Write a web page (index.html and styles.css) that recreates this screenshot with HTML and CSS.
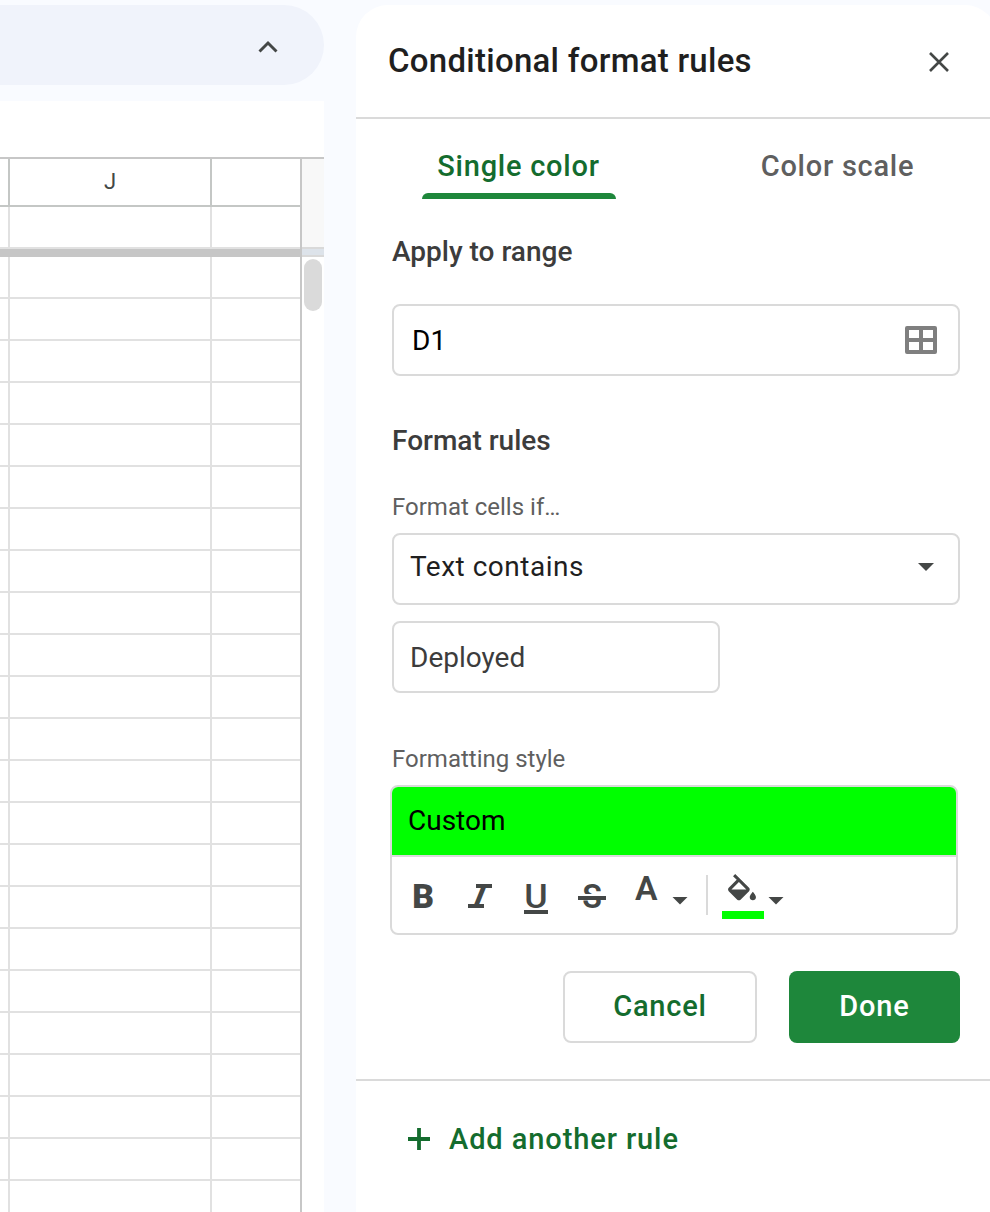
FILE: index.html
```
<!DOCTYPE html>
<html lang="en">
<head>
  <meta charset="utf-8">
  <title>Conditional format rules</title>
  <link rel="stylesheet" href="styles.css">
</head>
<body>
  <div class="app">
    <div class="left">
      <div class="toolbar">
        <svg class="chevron" width="24" height="16" viewBox="0 0 24 16"><path d="M3.500 12.500L12 4l8.500 8.500" fill="none" stroke="#444746" stroke-width="2.900"/></svg>
      </div>
      <div class="sheet">
        <div class="grid">
          <div class="row head"><span></span><span>J</span><span></span></div>
          <div class="row"><span></span><span></span><span></span></div>
          <div class="freeze"></div>
          <div class="row"><span></span><span></span><span></span></div>
          <div class="row"><span></span><span></span><span></span></div>
          <div class="row"><span></span><span></span><span></span></div>
          <div class="row"><span></span><span></span><span></span></div>
          <div class="row"><span></span><span></span><span></span></div>
          <div class="row"><span></span><span></span><span></span></div>
          <div class="row"><span></span><span></span><span></span></div>
          <div class="row"><span></span><span></span><span></span></div>
          <div class="row"><span></span><span></span><span></span></div>
          <div class="row"><span></span><span></span><span></span></div>
          <div class="row"><span></span><span></span><span></span></div>
          <div class="row"><span></span><span></span><span></span></div>
          <div class="row"><span></span><span></span><span></span></div>
          <div class="row"><span></span><span></span><span></span></div>
          <div class="row"><span></span><span></span><span></span></div>
          <div class="row"><span></span><span></span><span></span></div>
          <div class="row"><span></span><span></span><span></span></div>
          <div class="row"><span></span><span></span><span></span></div>
          <div class="row"><span></span><span></span><span></span></div>
          <div class="row"><span></span><span></span><span></span></div>
          <div class="row"><span></span><span></span><span></span></div>
          <div class="row"><span></span><span></span><span></span></div>
          <div class="row"><span></span><span></span><span></span></div>
        </div>
        <div class="scroll">
          <div class="scroll-top"></div>
          <div class="scroll-freeze"></div>
          <div class="thumb"></div>
        </div>
      </div>
    </div>

    <div class="panel">
      <div class="panel-header">
        <h1>Conditional format rules</h1>
        <svg class="close" width="24" height="24" viewBox="0 0 24 24"><path d="M3 3l18 18M21 3L3 21" stroke="#444746" stroke-width="2.600"/></svg>
      </div>
      <div class="tabs">
        <div class="tab active"><span>Single color</span></div>
        <div class="tab"><span>Color scale</span></div>
      </div>
      <div class="form">
        <h2 class="range-title">Apply to range</h2>
        <div class="field range">
          <span>D1</span>
          <svg width="32" height="28" viewBox="0 0 32 28"><path fill="#7f7f7f" fill-rule="evenodd" d="M2 0h28a2 2 0 0 1 2 2v24a2 2 0 0 1-2 2H2a2 2 0 0 1-2-2V2a2 2 0 0 1 2-2zM4 4v8h10V4zM18 4v8h10V4zM4 16v8h10v-8zM18 16v8h10v-8z"/></svg>
        </div>
        <h2 class="rules-title">Format rules</h2>
        <div class="label cells-label">Format cells if…</div>
        <div class="field select">
          <span>Text contains</span>
          <svg width="16" height="8" viewBox="0 0 16 8"><path d="M0 0h16L8 8z" fill="#444746"/></svg>
        </div>
        <div class="field value"><span>Deployed</span></div>
        <div class="label style-label">Formatting style</div>
        <div class="style-box">
          <div class="preview"><span>Custom</span></div>
          <div class="tools">
            <svg width="32" height="40" viewBox="0 0 32 40"><text class="glyph heavy" x="4.300" y="33">B</text></svg>
            <svg width="32" height="40" viewBox="0 0 32 40">
              <text class="glyph" transform="translate(6.300 33) skewX(-22)">I</text>
              <path d="M12 9h16v4H12zM4 29h16v4H4z" fill="#444746"/>
            </svg>
            <svg width="32" height="40" viewBox="0 0 32 40">
              <text class="glyph regular" x="4.300" y="33" textLength="23.400" lengthAdjust="spacingAndGlyphs">U</text>
              <path d="M4 35h24v4H4z" fill="#444746"/>
            </svg>
            <svg width="32" height="40" viewBox="0 0 32 40">
              <text class="glyph medium" x="6.200" y="33" textLength="19.600" lengthAdjust="spacingAndGlyphs">S</text>
              <path d="M4 19h24v2H4z" fill="#fff"/>
              <path d="M2 21h28v4H2z" fill="#444746"/>
            </svg>
            <svg width="60" height="40" viewBox="0 0 60 40">
              <text class="glyph medium" x="2.900" y="25">A</text>
              <path d="M40.500 22h15L48 29.500z" fill="#444746"/>
            </svg>
            <div class="separator"></div>
            <svg class="fill" width="64" height="44" viewBox="0 0 64 44">
              <path transform="translate(1.400 -1) scale(1.550)" fill="#444746" d="M16.560 8.940L7.620 0 6.210 1.410l2.380 2.380-5.150 5.150c-.59.59-.59 1.540 0 2.120l5.500 5.500c.29.29.68.44 1.060.44s.77-.15 1.060-.44l5.500-5.500c.59-.58.59-1.530 0-2.120zM5.210 10L10 5.210 14.790 10H5.210zM19 11.500s-2 2.170-2 3.500c0 1.100.9 2 2 2s2-.9 2-2c0-1.330-2-3.500-2-3.500z"/>
              <path d="M0 36h42v8H0z" fill="#0f0"/>
              <path d="M46.500 22h15L54 29.500z" fill="#444746"/>
            </svg>
          </div>
        </div>
        <div class="actions">
          <button class="cancel">Cancel</button>
          <button class="done">Done</button>
        </div>
      </div>
      <div class="add">
        <svg width="22" height="22" viewBox="0 0 22 22"><path d="M11 0v22M0 11h22" stroke="#146c2e" stroke-width="3.800"/></svg>
        <span>Add another rule</span>
      </div>
    </div>
  </div>
</body>
</html>
```
FILE: styles.css
```
* {
  box-sizing: border-box;
}

body {
  margin: 0;
  font-family: Roboto, Arial, sans-serif;
  background-color: #f9fbff;
  height: 1212px;
  overflow: hidden;
}

svg {
  flex: none;
  overflow: visible;
}

.app {
  display: flex;
  gap: 32px;
  height: 1212px;
  padding-top: 5px;
}

.left {
  width: 324px;
  flex: none;
  display: flex;
  flex-direction: column;
  gap: 16px;
}

.toolbar {
  height: 80px;
  flex: none;
  display: flex;
  align-items: center;
  justify-content: flex-end;
  padding: 0 44px 0 0;
  background-color: #f0f3fb;
  border-radius: 0 40px 40px 0;
}

.chevron {
  margin-top: 4px;
}

/* spreadsheet */
.sheet {
  display: flex;
  flex: 1;
  min-height: 0;
  padding-top: 56px;
  background-color: #fff;
  overflow: hidden;
}

.grid {
  width: 302px;
  border-top: 2px solid #c7c7c7;
  border-right: 2px solid #c7c7c7;
}

.row {
  display: grid;
  grid-template-columns: 10px 202px 88px;
  height: 42px;
  border-bottom: 2px solid #e1e1e1;
}

.row span {
  border-right: 2px solid #e1e1e1;
}

.row span:last-child {
  border-right: none;
}

.head {
  height: 48px;
  border-color: #c4c7c5;
  font-size: 22px;
  line-height: 46px;
  text-align: center;
  color: #444746;
}

.head span {
  border-color: #c4c7c5;
}

.freeze {
  height: 8px;
  margin-right: -2px;
  background-color: #c6c6c6;
}

.scroll {
  width: 22px;
  border-top: 2px solid #c7c7c7;
}

.scroll-top {
  height: 88px;
  background-color: #f8f8f8;
}

.scroll-freeze {
  height: 10px;
  background-color: #dde3ea;
  border-top: 2px solid #d9d9d9;
  border-bottom: 2px solid #d9d9d9;
}

.thumb {
  width: 18px;
  height: 52px;
  margin: 2px;
  border-radius: 9px;
  background-color: #dadada;
}

/* side panel */
.panel {
  width: 641px;
  flex: none;
  background-color: #fff;
  border-radius: 32px 32px 0 0;
}

.panel-header {
  display: flex;
  align-items: center;
  justify-content: space-between;
  height: 114px;
  padding: 0 46px 0 32px;
  border-bottom: 2px solid #dadada;
}

h1 {
  margin: 0;
  padding-bottom: 2px;
  font-size: 33px;
  font-weight: 500;
  letter-spacing: 0.27px;
  color: #1f1f1f;
}

.close {
  margin-top: 2px;
}

.tabs {
  display: flex;
  height: 80px;
  padding-left: 3px;
}

.tab {
  flex: 1;
  display: flex;
  justify-content: center;
  font-size: 29px;
  font-weight: 500;
  letter-spacing: 0.75px;
  line-height: 94px;
  color: #5f5f5f;
}

.active {
  color: #146c2e;
}

/* underline, centred under the tab text */
.active::after {
  content: "";
  width: 194px;
  height: 6px;
  margin: 74px -16px 0 -178px;
  border-radius: 6px 6px 0 0;
  background-color: #1e873b;
}

.form {
  height: 882px;
  padding: 0 37px 0 36px;
  border-bottom: 2px solid #dadada;
}

h2 {
  margin: 0;
  font-size: 28px;
  font-weight: 500;
  line-height: 40px;
  color: #3c3c3c;
}

.range-title {
  padding-top: 33px;
}

.field {
  display: flex;
  justify-content: space-between;
  align-items: center;
  height: 72px;
  border: 2px solid #dadada;
  border-radius: 8px;
  font-size: 28px;
}

.range {
  margin-top: 32px;
  padding: 0 21px 0 18px;
  color: #000;
}

.rules-title {
  margin-top: 45px;
}

.label {
  font-size: 24px;
  line-height: 30px;
  color: #5f5f5f;
}

.cells-label {
  margin-top: 31px;
}

.select {
  margin-top: 11px;
  padding: 0 24px 4px 16px;
  letter-spacing: 0.5px;
  color: #1f1f1f;
}

.select span {
  padding-bottom: 2px;
}

.value {
  width: 328px;
  margin-top: 16px;
  padding-left: 16px;
  color: #3c3c3c;
}

.style-label {
  margin-top: 51px;
}

.style-box {
  width: 568px;
  height: 150px;
  margin: 11px 0 0 -2px;
  border: 2px solid #dadada;
  border-radius: 8px;
  overflow: hidden;
}

.preview {
  height: 70px;
  padding-left: 16px;
  background-color: #0f0;
  border-bottom: 2px solid #dadada;
  font-size: 28px;
  line-height: 67px;
}

.tools {
  display: flex;
  gap: 24px;
  padding: 18px 0 0 16px;
}

.separator {
  width: 2px;
  height: 40px;
  margin-left: -10px;
  background-color: #dadada;
}

.fill {
  margin-left: -10px;
}

.glyph {
  font-family: Roboto, sans-serif;
  font-size: 33.7px;
  font-weight: 700;
  fill: #444746;
}

.heavy {
  font-weight: 900;
}

.medium {
  font-weight: 600;
}

.regular {
  font-weight: 500;
}

.actions {
  display: flex;
  justify-content: flex-end;
  gap: 32px;
  margin-top: 36px;
}

button {
  height: 72px;
  padding: 0 0 2px;
  border: none;
  border-radius: 8px;
  font-family: inherit;
  font-size: 29px;
  font-weight: 500;
  letter-spacing: 0.8px;
}

.cancel {
  width: 194px;
  border: 2px solid #dadada;
  background-color: #fff;
  color: #146c2e;
}

.done {
  width: 171px;
  background-color: #1e873b;
  color: #fff;
}

.add {
  display: flex;
  align-items: center;
  gap: 19px;
  height: 116px;
  padding-left: 52px;
  font-size: 29px;
  font-weight: 500;
  letter-spacing: 0.9px;
  color: #146c2e;
}
```
